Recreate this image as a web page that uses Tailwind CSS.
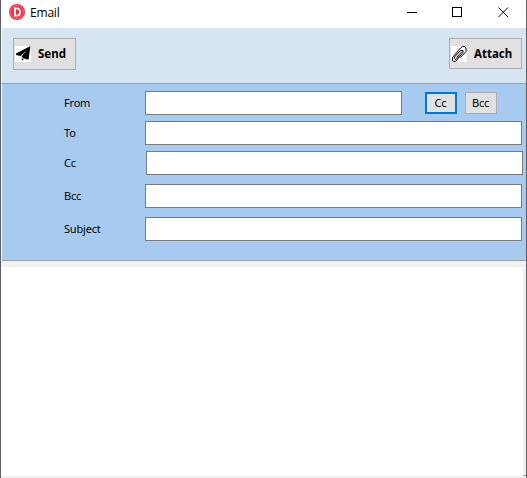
<!DOCTYPE html>
<html lang="en">
<head>
<meta charset="utf-8">
<title>Email</title>
<script src="https://cdn.jsdelivr.net/npm/@tailwindcss/browser@4"></script>
</head>
<body class="h-[478px] w-[527px] overflow-hidden bg-white font-['Noto_Sans',sans-serif] text-[11px] text-black">
<div class="flex h-[478px] w-[527px] flex-col border-x border-[#5c5f66] bg-white">
  <header class="flex h-7 shrink-0 items-start pl-2">
    <svg class="mt-1 h-4 w-4 shrink-0" viewBox="0 0 16 16"><circle cx="8" cy="8" r="8" fill="#f9283c"/><circle cx="8" cy="8" r="6.5" fill="none" stroke="#fff" stroke-opacity=".55" stroke-width=".6"/><path d="M5.9 4.4H7.7C12.2 4.4 12.2 11.6 7.7 11.6H5.9Z" fill="none" stroke="#fff" stroke-width="1.9"/></svg>
    <h1 class="ml-[5px] mt-1 font-['Open_Sans',sans-serif] text-[12px] leading-[18px] tracking-[-0.2px]">Email</h1>
    <svg class="ml-auto mr-[17px] mt-[7px] h-[11px] w-[102px]" viewBox="0 0 102 11" fill="none" stroke="#000"><path d="M0 5.5H10M45.5.5H54.5V9.5H45.5Z" shape-rendering="crispEdges"/><path d="M91.5.5L101 10M101 .5L91.5 10"/></svg>
  </header>
  <div class="h-14 shrink-0 border-b border-[#a0a0a0] pl-px">
    <div class="flex h-full items-start justify-between bg-[#d7e4f2] pl-[11px] pr-1 pt-[10px]">
      <button class="flex h-8 w-[63px] items-center border border-[#adadad] bg-[#e1e1e1] pl-px font-bold">
        <svg class="h-4 w-4 shrink-0 bg-white" viewBox="0 0 16 16"><path d="M15.5 0L1 7.5V9L5.5 10L12 4L6.5 10.5L8 12L12.5 13.5H13.5ZM7 12.5H8.5V13.5L7 14.5Z"/></svg>
        <span class="ml-[7px] text-[11.5px]">Send</span>
      </button>
      <button class="flex h-[31px] w-[73px] items-center border border-[#adadad] bg-[#e1e1e1] pl-px font-bold">
        <svg class="h-4 w-4 shrink-0 bg-white" viewBox="0 0 16 16" fill="none" stroke="#000" stroke-width="1" stroke-linejoin="round"><path d="M9 9.5L5 13.5L3.5 12.5V11L9.5 4.5L12 4.5V6.5L5 15L3 15.5L1.5 14.5V11.5L9.5 2L11.5.5H13.5L15 2V5.5L9.5 11.5M5.5 11.5L11 5.5"/></svg>
        <span class="ml-[7px] pt-px text-[11.5px]">Attach</span>
      </button>
    </div>
  </div>
  <form class="ml-px flex h-[177px] shrink-0 flex-col border-b border-[#a0a0a0] bg-[#a6caf0] pt-[7px] tracking-[-0.2px]">
    <div class="flex h-6 items-center pl-[62px]"><label class="w-[81px]">From</label><input class="h-6 w-[257px] border border-[#7a7a7a] bg-white"><button type="button" class="ml-[23px] flex h-[22px] w-8 items-center justify-center border-2 border-[#0078d7] bg-[#e1e1e1] pr-px">Cc</button><button type="button" class="ml-2 flex h-[22px] w-8 items-center justify-center border border-[#adadad] bg-[#e1e1e1] pr-px">Bcc</button></div>
    <div class="mt-[6px] flex h-6 items-center pl-[62px]"><label class="w-[81px]">To</label><input class="h-6 w-[377px] border border-[#7a7a7a] bg-white"></div>
    <div class="mt-[6px] flex h-6 items-center pl-[62px]"><label class="w-[82px]">Cc</label><input class="h-6 w-[377px] border border-[#7a7a7a] bg-white"></div>
    <div class="mt-[9px] flex h-6 items-center pl-[62px]"><label class="w-[81px]">Bcc</label><input class="h-6 w-[377px] border border-[#7a7a7a] bg-white"></div>
    <div class="mt-[9px] flex h-6 items-center pl-[62px]"><label class="w-[81px]">Subject</label><input class="h-6 w-[377px] border border-[#7a7a7a] bg-white"></div>
  </form>
  <main class="flex grow border-b-2 border-t-6 border-[#f0f0f0] bg-white">
    <div class="grow"></div>
    <div class="mt-px w-[3px] border-b border-[#a0a0a0] bg-[#f0f0f0]"></div>
  </main>
</div>
</body>
</html>
